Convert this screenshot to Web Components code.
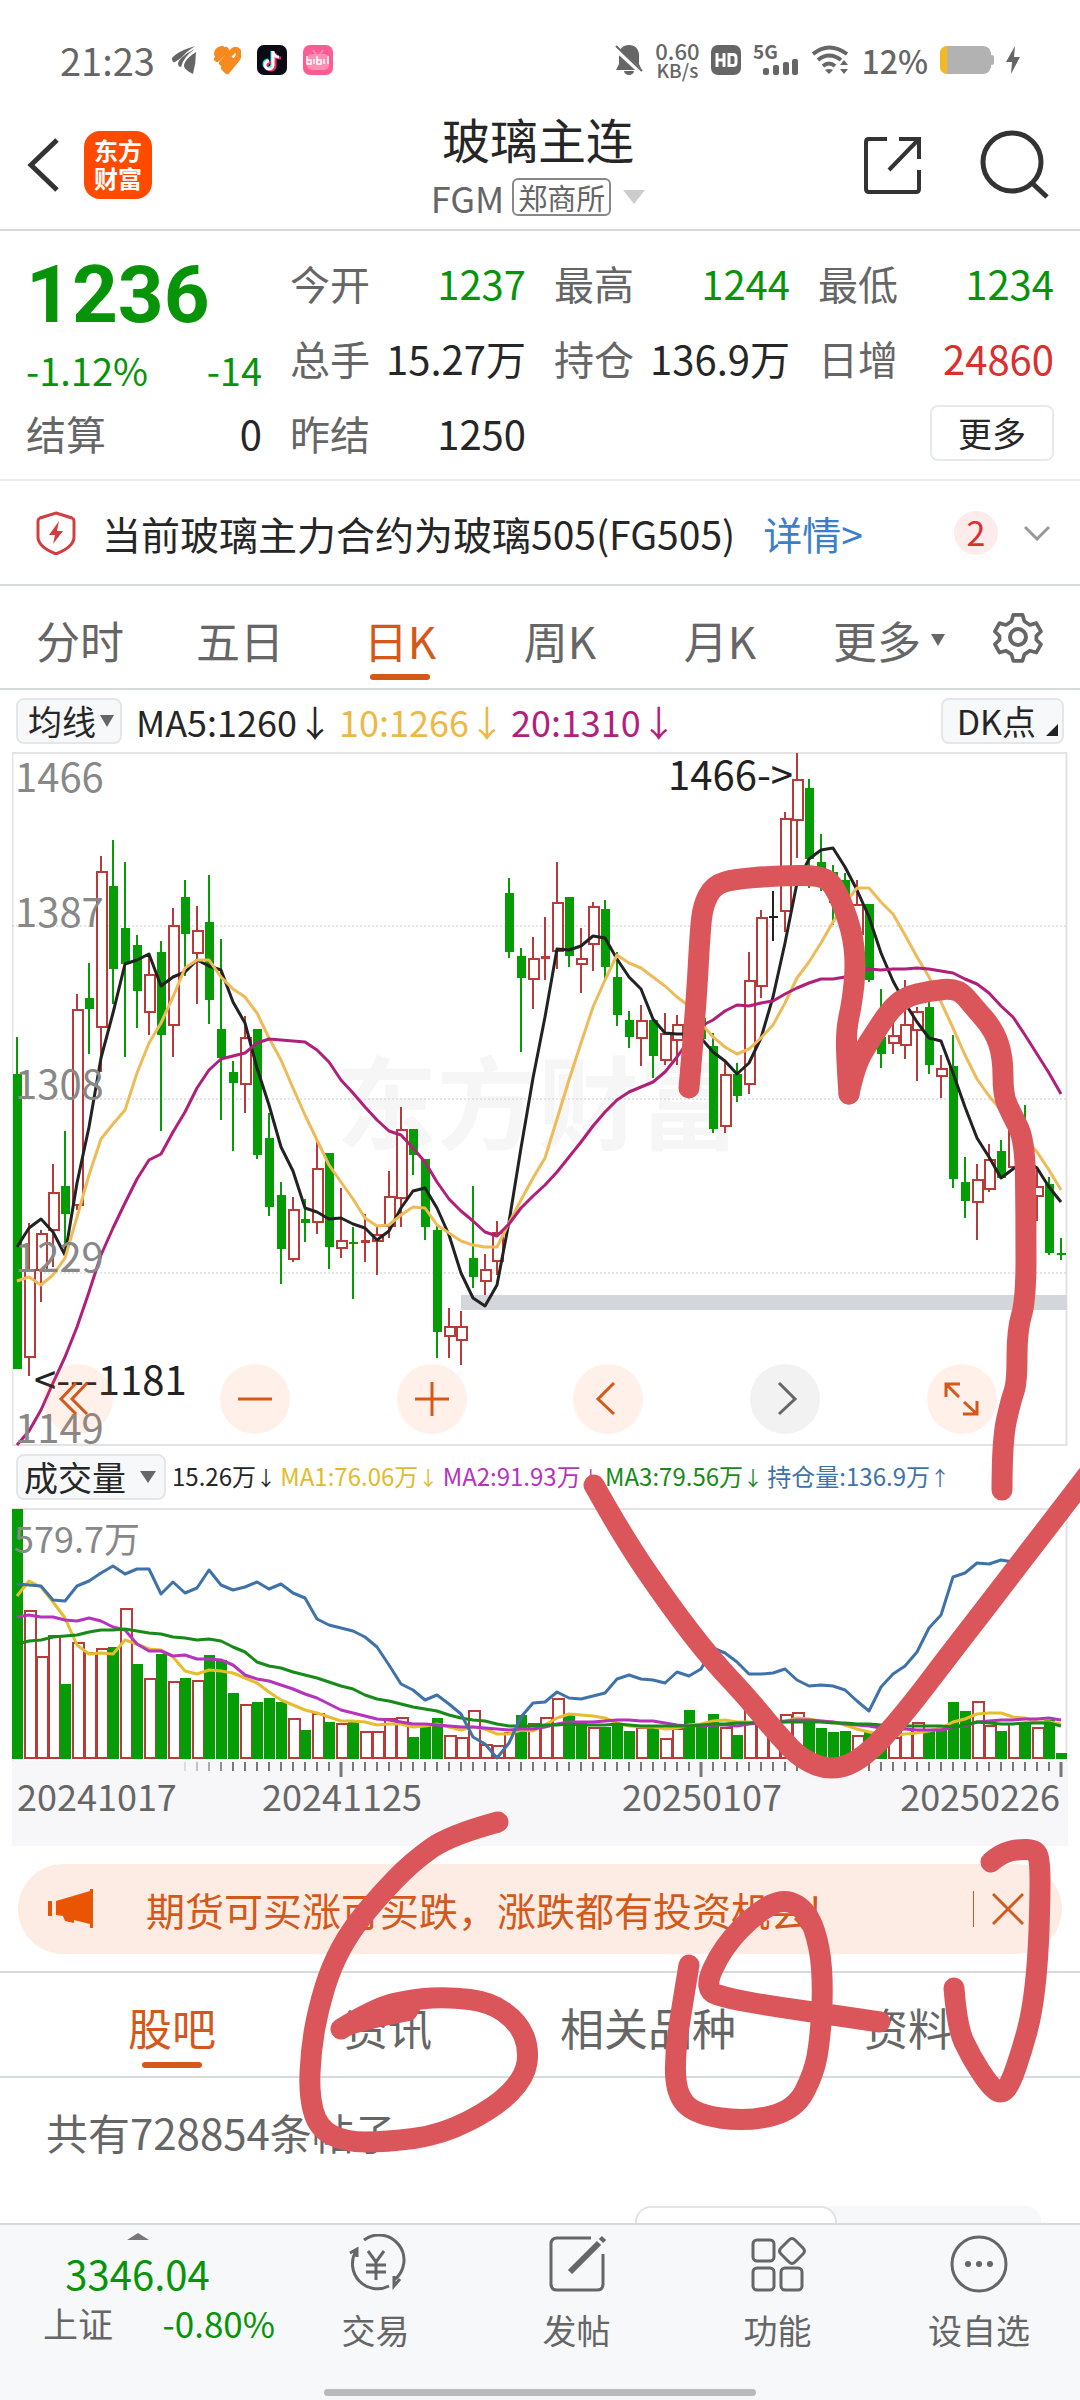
<!DOCTYPE html>
<html lang="zh-CN">
<head>
<meta charset="utf-8">
<meta name="viewport" content="width=device-width, initial-scale=1">
<title>玻璃主连 FGM</title>
<style>
  :root {
    --text: #262626;
    --sub: #666;
    --down: #089408;
    --up: #d93030;
    --accent: #d4581a;
    --line: #d5dada;
    --panel: #f7f8fa;
  }
  body {
    margin: 0;
    background: #fff;
    color: var(--text);
    font-family: "Noto Sans CJK SC", "Noto Sans", sans-serif;
  }
</style>
</head>
<body>
<futures-app>
  <status-bar></status-bar>
  <quote-header name="玻璃主连" code="FGM" exchange="郑商所"></quote-header>
  <quote-summary price="1236" percent="-1.12%" change="-14">
    <quote-cell slot="settle" label="结算" value="0"></quote-cell>
    <quote-cell label="今开" value="1237" tone="down"></quote-cell>
    <quote-cell label="最高" value="1244" tone="down"></quote-cell>
    <quote-cell label="最低" value="1234" tone="down"></quote-cell>
    <quote-cell label="总手" value="15.27万"></quote-cell>
    <quote-cell label="持仓" value="136.9万"></quote-cell>
    <quote-cell label="日增" value="24860" tone="up"></quote-cell>
    <quote-cell label="昨结" value="1250"></quote-cell>
  </quote-summary>
  <notice-bar count="2">当前玻璃主力合约为玻璃505(FG505)</notice-bar>
  <period-tabs></period-tabs>
  <k-chart></k-chart>
  <volume-chart></volume-chart>
  <promo-banner>期货可买涨可买跌，涨跌都有投资机会!</promo-banner>
  <page-tabs></page-tabs>
  <post-list total="728854"></post-list>
  <nav-bar slot="nav"></nav-bar>
  <pen-marks slot="overlay"></pen-marks>
</futures-app>

<script>
const RESET = `
  * { box-sizing: border-box; }
  :host { display: block; box-sizing: border-box; }
  button { margin: 0; padding: 0; border: 0; background: none; font: inherit; color: inherit; }
  a { color: inherit; text-decoration: none; }
  svg { display: block; flex: none; }
`;

class BaseElement extends HTMLElement {
  constructor() {
    super();
    this.attachShadow({ mode: 'open' });
  }

  connectedCallback() {
    this.shadowRoot.innerHTML = `<style>${RESET}${this.styles()}</style>${this.render()}`;
  }

  attr(name) {
    return this.getAttribute(name) || '';
  }
}

class FuturesApp extends BaseElement {
  styles() {
    return `
      :host { position: relative; display: flex; flex-direction: column; height: 100vh; overflow: hidden; }
      main { flex: 1; min-height: 0; overflow: hidden; display: flex; flex-direction: column; }
    `;
  }
  render() {
    return `<main><slot></slot></main><slot name="nav"></slot><slot name="overlay"></slot>`;
  }
}
customElements.define('futures-app', FuturesApp);

class StatusBar extends BaseElement {
  styles() {
    return `
      :host { display: flex; justify-content: space-between; align-items: center; flex: none;
        height: 84px; padding: 36px 60px 0; color: #666; }
      div { display: flex; align-items: center; }
      .left { gap: 16px; }
      .right { gap: 12px; }
      time { font-size: 38px; line-height: 48px; }
      .speed { flex-direction: column; font-size: 22px; line-height: 20px; font-weight: 500; }
      .speed small { font-size: 19px; line-height: 20px; }
      .battery { font-size: 32px; line-height: 48px; font-weight: 500; }
    `;
  }
  render() {
    return `
      <div class="left">
        <time>21:23</time>
        <svg width="26" height="30" viewBox="0 0 26 30" fill="#666"><path d="M24 1C14 4 5 8 1 13q0 5 3 4 3-2 6-4Q16 6 24 1zM24 4C16 8 10 12 7 18q0 4 3 4Q13 11 24 4zM25 7c-6 4-11 8-12 13q-1 4 9 9 3-11 3-22z"/></svg>
        <svg width="28" height="30" viewBox="0 0 28 30" fill="none" stroke="#f68a1f" stroke-width="6" stroke-linecap="round" stroke-linejoin="round"><path d="M4 9q0-4 5-5M4 14 13 5M9 18l9-10q4-5 7-2 2 4-1 8L14 26l-3-3 7-8"/></svg>
        <svg width="30" height="30" viewBox="0 0 30 30"><rect width="30" height="30" rx="7" fill="#0a0b14"/><g fill="none" stroke-width="3"><path stroke="#25e3e0" d="M15 6v13a4 4 0 1 1-4-4M15 7c1 4 3 5 6 5"/><path stroke="#f3305c" d="M18 8v13a4 4 0 1 1-4-4M18 9c1 3 3 4 6 4"/><path stroke="#fff" d="M16 6v14a4 4 0 1 1-4-4M16 7c1 4 3 5 6 5"/></g></svg>
        <svg width="30" height="30" viewBox="0 0 30 30"><rect width="30" height="30" rx="7" fill="#fb5d92"/><rect x="4" y="9" width="22" height="16" rx="5" fill="#fc8fb4"/><path d="M10 5l3 4M20 5l-3 4" stroke="#fc8fb4" stroke-width="2"/><path d="M4 11v8h4v-4H4M11 14v5M14 11v8h4v-4h-4M21 14v5M25 11v8" fill="none" stroke="#fff" stroke-width="1.500"/></svg>
      </div>
      <div class="right">
        <svg width="28" height="32" viewBox="0 0 28 32"><path d="M14 1c6 0 10 4 10 10v9l3 6H1l3-6v-9C4 5 8 1 14 1zM9 27h10a5 4 0 0 1-10 0z" fill="#666"/><path d="M0 4l27 25" stroke="#fff" stroke-width="5"/><path d="M1 2l26 25" stroke="#666" stroke-width="2"/></svg>
        <div class="speed"><span>0.60</span><small>KB/s</small></div>
        <svg width="30" height="30" viewBox="0 0 30 30"><rect width="30" height="30" rx="7" fill="#666"/><path d="M6 8v14M6 15h7M13 8v14M18 9.500h4q3 0 3 3v5q0 3-3 3h-4z" fill="none" stroke="#fff" stroke-width="3"/></svg>
        <svg width="46" height="32" viewBox="0 0 46 32" fill="#666"><text x="0" y="15" font-size="19" font-weight="700">5G</text><rect x="10" y="24" width="6" height="7" rx="2"/><rect x="20" y="21" width="6" height="10" rx="2"/><rect x="30" y="18" width="6" height="13" rx="2"/><rect x="39" y="15" width="6" height="16" rx="2"/></svg>
        <svg width="38" height="30" viewBox="0 0 38 30" fill="none" stroke="#666" stroke-width="4"><path d="M2 9q16-13 34 0M7 15q11-9 23 0M12 21q6-5 12 0"/><path d="M14 25q4-2 8 0l-4 4z" fill="#666" stroke="none"/><path d="M33 15l4 5h-8zM33 29l4-5h-8z" fill="#666" stroke="none"/></svg>
        <span class="battery">12%</span>
        <svg width="54" height="28" viewBox="0 0 54 28"><rect width="51" height="28" rx="8" fill="#b2b2b2"/><rect x="50" y="9" width="4" height="10" rx="2" fill="#b2b2b2"/><path d="M7 0v28A7 7 0 0 1 0 20V8A7 7 0 0 1 7 0z" fill="#f6b820"/></svg>
        <svg width="14" height="28" viewBox="0 0 14 28" fill="#666"><path d="M9 0 0 16h6l-1 12 9-17H8z"/></svg>
      </div>
    `;
  }
}
customElements.define('status-bar', StatusBar);

class QuoteHeader extends BaseElement {
  styles() {
    return `
      :host { display: grid; grid-template-columns: 1fr auto 1fr; align-items: center; flex: none;
        height: 147px; padding: 18px 30px 2px 26px; border-bottom: 2px solid var(--line); }
      .left { display: flex; align-items: center; gap: 24px; }
      .logo { width: 68px; height: 68px; border-radius: 16px; background: #ff4a00; color: #fff;
        font-size: 24px; line-height: 28px; font-weight: 700; padding: 5px 10px; white-space: nowrap; }
      .right { display: flex; align-items: center; justify-content: flex-end; gap: 58px; }
      .mid { display: flex; flex-direction: column; align-items: center; }
      h1 { margin: 0; font-size: 48px; line-height: 64px; font-weight: 400; }
      .code { display: flex; align-items: center; gap: 8px; font-size: 36px; line-height: 54px; color: var(--sub); }
      .tag { border: 2px solid #888; border-radius: 6px; padding: 0 4px; font-size: 29px; line-height: 34px; }
      .code svg { margin-left: 4px; }
    `;
  }
  render() {
    return `
      <div class="left">
        <button aria-label="返回"><svg width="34" height="54" viewBox="0 0 34 54" fill="none" stroke="#333" stroke-width="5"><path d="M31 2 5 27l26 25"/></svg></button>
        <div class="logo">东方<br>财富</div>
      </div>
      <div class="mid">
        <h1>${this.attr('name')}</h1>
        <div class="code">${this.attr('code')}<span class="tag">${this.attr('exchange')}</span>
          <svg width="22" height="14" viewBox="0 0 22 14" fill="#ccc"><path d="M0 0h22L11 14z"/></svg>
        </div>
      </div>
      <div class="right">
        <button aria-label="分享"><svg width="60" height="60" viewBox="0 0 60 60" fill="none" stroke="#333" stroke-width="4"><path d="M25 4H7q-3 0-3 3v47q0 3 3 3h47q3 0 3-3V35M37 4h20v20M57 4 27 35"/></svg></button>
        <button aria-label="搜索"><svg width="70" height="70" viewBox="0 0 70 70" fill="none" stroke="#333" stroke-width="5"><circle cx="32" cy="32" r="29"/><path d="M52 53l15 14"/></svg></button>
      </div>
    `;
  }
}
customElements.define('quote-header', QuoteHeader);

class QuoteCell extends BaseElement {
  styles() {
    return `
      :host { display: flex; justify-content: space-between; align-items: center; height: 75px;
        font-size: 40px; line-height: 48px; white-space: nowrap; }
      .label { color: var(--sub); }
      :host([tone="down"]) .value { color: var(--down); }
      :host([tone="up"]) .value { color: var(--up); }
    `;
  }
  render() {
    return `<span class="label">${this.attr('label')}</span><span class="value">${this.attr('value')}</span>`;
  }
}
customElements.define('quote-cell', QuoteCell);

class QuoteSummary extends BaseElement {
  styles() {
    return `
      :host { display: grid; grid-template-columns: 236fr 764fr; column-gap: 28px; flex: none;
        padding: 14px 26px 9px; border-bottom: 2px solid #eceeee; }
      .price { font-family: Roboto, sans-serif; font-size: 80px; line-height: 100px; font-weight: 700; color: var(--down); }
      .change { display: flex; justify-content: space-between; color: var(--down);
        font-size: 38px; line-height: 50px; }
      .cells { display: grid; grid-template-columns: repeat(3, 1fr); column-gap: 28px; }
      .more { grid-column: 3; grid-row: 3; justify-self: end; align-self: center; width: 124px; height: 56px;
        border: 2px solid #e6eaea; border-radius: 8px; font-size: 34px; line-height: 48px; }
    `;
  }
  render() {
    return `
      <div>
        <div class="price">${this.attr('price')}</div>
        <div class="change"><span>${this.attr('percent')}</span><span>${this.attr('change')}</span></div>
        <slot name="settle"></slot>
      </div>
      <div class="cells"><slot></slot><button class="more">更多</button></div>
    `;
  }
}
customElements.define('quote-summary', QuoteSummary);

class NoticeBar extends BaseElement {
  styles() {
    return `
      :host { display: flex; align-items: center; flex: none; height: 105px; padding: 0 30px 0 36px;
        border-bottom: 2px solid var(--line); font-size: 39px; line-height: 48px; white-space: nowrap; }
      .text { margin: 0 28px 0 26px; }
      a { color: #3b7fc9; }
      .count { margin-left: auto; width: 44px; height: 44px; border-radius: 50%; background: #fdeceb;
        color: var(--up); font-size: 34px; line-height: 42px; text-align: center; }
      button { margin-left: 26px; }
    `;
  }
  render() {
    return `
      <svg width="40" height="44" viewBox="0 0 40 44" fill="none" stroke="#d04040" stroke-width="3"><path d="M20 2l16 5q2 1 2 3v16c0 8-8 13-18 17C10 39 2 34 2 26V10q0-2 2-3z"/><path d="M23 10 13 24h6l-2 9 10-13h-6z" fill="#d04040" stroke="none"/></svg>
      <span class="text"><slot></slot></span>
      <a href="#detail">详情&gt;</a>
      <span class="count">${this.attr('count')}</span>
      <button aria-label="展开"><svg width="26" height="16" viewBox="0 0 26 16" fill="none" stroke="#999" stroke-width="3"><path d="M1 2l12 12L25 2"/></svg></button>
    `;
  }
}
customElements.define('notice-bar', NoticeBar);

class PeriodTabs extends BaseElement {
  styles() {
    return `
      :host { display: flex; align-items: center; flex: none; height: 104px;
        border-bottom: 2px solid var(--line); font-size: 44px; line-height: 56px; color: var(--sub); }
      .tab { flex: 160; height: 100%; display: flex; flex-direction: column; align-items: center;
        justify-content: flex-end; gap: 6px; padding-bottom: 8px; }
      .tab::after { content: ""; width: 60px; height: 6px; border-radius: 3px; }
      .tab.on { color: var(--accent); }
      .tab.on::after { background: var(--accent); }
      .more { flex: 178; display: flex; align-items: center; justify-content: center; gap: 10px; padding-top: 6px; }
      .gear { flex: 88; display: flex; padding-left: 14px; }
    `;
  }
  render() {
    const tabs = ['分时', '五日', '日K', '周K', '月K']
      .map(t => `<button class="tab${t === '日K' ? ' on' : ''}">${t}</button>`).join('');
    return `
      ${tabs}
      <button class="more">更多<svg width="14" height="12" viewBox="0 0 14 12" fill="#666"><path d="M0 0h14L7 12z"/></svg></button>
      <button class="gear" aria-label="设置"><svg width="52" height="52" viewBox="0 0 52 52" fill="none" stroke="#666" stroke-width="4" stroke-linejoin="round"><path d="M21 2h10l2 7 6 4 7-2 5 9-5 5v4l5 5-5 9-7-2-6 4-2 7H21l-2-7-6-4-7 2-5-9 5-5v-4l-5-5 5-9 7 2 6-4z" transform="translate(2 2) scale(.92)"/><circle cx="26" cy="26" r="8"/></svg></button>
    `;
  }
}
customElements.define('period-tabs', PeriodTabs);

// Both charts share one x scale: 88 bars, 12 units apart.
const STEP = 12;
const FIRST_X = 17;
const px = i => FIRST_X + i * STEP;

const line = (points, color, width = 3) =>
  `<polyline fill="none" stroke="${color}" stroke-width="${width}" stroke-linejoin="round" points="${points.map((y, i) => `${px(i)},${y}`).join(' ')}"/>`;

const GREEN = '#069c06';
const RED = '#b93a38';

// kind, high, body top, body bottom, low
const CANDLES = [
  'g 1037 1074 1369 1369', 'r 1223 1269 1356 1376', 'r 1230 1233 1269 1302', 'r 1164 1192 1229 1267',
  'g 1131 1186 1214 1255', 'r 994 1009 1204 1210', 'g 963 998 1009 1054', 'r 856 871 1026 1072',
  'g 840 886 969 1004', 'g 862 928 964 1057', 'g 935 945 991 1028', 'r 955 974 1011 1035',
  'g 941 952 1035 1131', 'r 908 925 1024 1057', 'g 880 897 934 976', 'r 906 930 952 1004',
  'g 875 922 1000 1024', 'g 939 1029 1058 1120', 'g 1061 1072 1083 1151', 'r 1016 1037 1083 1113',
  'g 1029 1029 1155 1159', 'g 1113 1138 1207 1216', 'g 1182 1195 1249 1284', 'r 1197 1209 1258 1262',
  'g 1199 1219 1223 1242', 'r 1142 1168 1221 1234', 'g 1153 1153 1247 1269', 'r 1188 1240 1247 1258',
  'g 1227 1242 1244 1299', 'f 1214 1240 1243 1262', 'r 1225 1234 1240 1275', 'r 1171 1196 1225 1238',
  'r 1107 1129 1197 1227', 'g 1129 1129 1155 1175', 'g 1159 1159 1227 1240', 'g 1225 1230 1332 1358',
  'r 1308 1326 1335 1358', 'r 1311 1326 1339 1365', 'g 1186 1258 1277 1288', 'r 1254 1269 1280 1295',
  'r 1221 1232 1260 1275', 'g 878 893 952 958', 'g 948 956 978 1052', 'r 937 958 978 1009',
  'f 917 956 959 980', 'r 862 902 950 969', 'g 897 897 956 967', 'r 928 958 963 993',
  'r 902 906 943 971', 'g 900 909 967 980', 'g 952 977 1015 1026', 'g 1011 1020 1037 1048',
  'r 1005 1020 1037 1066', 'g 1020 1020 1056 1078', 'r 1013 1033 1059 1065', 'r 1015 1024 1039 1065',
  'r 1000 1020 1040 1060', 'g 1010 1018 1039 1045', 'g 1033 1046 1129 1133', 'r 1062 1074 1125 1133',
  'g 1063 1074 1096 1102', 'r 952 980 1083 1094', 'r 910 917 985 998', 'k 891 916 918 941',
  'r 812 818 910 932', 'r 753 779 819 858', 'g 779 788 859 888', 'g 834 862 873 891',
  'g 865 872 903 925', 'g 873 880 905 910', 'r 880 904 933 933', 'g 904 904 980 982',
  'g 989 1037 1054 1068', 'r 1020 1035 1042 1054', 'r 980 1024 1044 1059', 'r 1007 1011 1029 1081',
  'g 1002 1007 1065 1074', 'r 1055 1068 1075 1098', 'g 1035 1066 1179 1188', 'g 1157 1182 1201 1218',
  'r 1164 1179 1201 1240', 'r 1144 1159 1188 1192', 'g 1140 1151 1178 1178', 'r 1110 1130 1166 1170',
  'g 1105 1130 1160 1170', 'r 1170 1186 1195 1221', 'g 1177 1184 1253 1255', 'g 1238 1253 1255 1260',
].map(row => row.split(' '));

const MA5 = [1247, 1228, 1219, 1232, 1255, 1183, 1127, 1058, 1013, 964, 960, 954, 986, 977, 972, 960, 966, 970, 1002, 1023, 1068, 1105, 1147, 1171, 1208, 1212, 1219, 1218, 1224, 1228, 1240, 1231, 1208, 1191, 1188, 1208, 1235, 1273, 1298, 1306, 1285, 1222, 1148, 1078, 1017, 949, 950, 946, 936, 938, 959, 977, 989, 1019, 1033, 1034, 1034, 1038, 1052, 1061, 1074, 1063, 1038, 997, 943, 883, 859, 850, 848, 867, 890, 917, 953, 981, 1003, 1022, 1038, 1041, 1073, 1107, 1138, 1157, 1178, 1169, 1160, 1168, 1187, 1202];
const MA10 = [1281, 1277, 1285, 1275, 1258, 1217, 1175, 1139, 1124, 1110, 1073, 1043, 1023, 997, 968, 960, 960, 977, 989, 997, 1013, 1038, 1060, 1088, 1115, 1140, 1165, 1182, 1199, 1218, 1226, 1225, 1215, 1207, 1208, 1225, 1233, 1241, 1245, 1247, 1247, 1223, 1200, 1178, 1158, 1119, 1080, 1043, 1007, 980, 955, 963, 968, 977, 986, 997, 1006, 1023, 1037, 1047, 1054, 1049, 1038, 1025, 1003, 978, 962, 943, 922, 903, 888, 888, 902, 914, 935, 957, 977, 1002, 1028, 1055, 1079, 1096, 1110, 1125, 1138, 1152, 1170, 1190];
const MA20 = [1445, 1431, 1410, 1383, 1357, 1327, 1292, 1255, 1228, 1203, 1179, 1160, 1154, 1132, 1112, 1088, 1070, 1059, 1056, 1053, 1043, 1039, 1040, 1041, 1042, 1050, 1062, 1080, 1093, 1107, 1120, 1131, 1135, 1148, 1162, 1182, 1199, 1211, 1221, 1232, 1236, 1224, 1208, 1196, 1185, 1172, 1157, 1142, 1126, 1112, 1100, 1092, 1087, 1082, 1072, 1057, 1040, 1026, 1020, 1011, 1005, 1006, 1003, 1001, 994, 988, 983, 979, 979, 977, 971, 969, 970, 969, 969, 968, 969, 971, 973, 979, 984, 993, 1006, 1017, 1035, 1054, 1073, 1094];

const INDICATOR_ROW = `
  .bar { display: flex; align-items: center; height: 62px; padding: 0 16px; white-space: nowrap; }
  .pick { height: 46px; border: 2px solid #e3e7ea; border-radius: 8px; background: var(--panel);
    display: flex; align-items: center; font-size: 34px; line-height: 40px; }
  .chart { position: relative; margin: 0 12px; }
  .chart > svg { width: 100%; height: auto; }
`;

class KChart extends BaseElement {
  styles() {
    return `${INDICATOR_ROW}
      .pick { gap: 4px; padding: 0 6px 0 10px; }
      .values { display: flex; gap: 6px; margin: 0 auto 0 14px; font-size: 36px; line-height: 48px; }
      .dk { align-items: center; padding: 0 4px 0 14px; gap: 10px; }
      .dk svg { align-self: flex-end; margin-bottom: 6px; }
      .tools { position: absolute; left: 31px; right: 71px; bottom: 12px; display: flex; justify-content: space-between; }
      .tools button { width: 70px; height: 70px; border-radius: 50%; background: rgba(255, 105, 40, .1); }
      .tools button.idle { background: #f2f2f2; }
      .tools svg { fill: none; stroke: var(--accent); stroke-width: 3; }
      .tools .idle svg { stroke: #666; }
    `;
  }

  candle([kind, high, top, bottom, low], i) {
    const x = px(i);
    const color = { g: GREEN, r: RED, f: RED, k: '#222' }[kind];
    const h = Math.max(bottom - top, 2);
    const body = kind === 'r'
      ? `<rect x="${x - 4}" y="${+top + 1}" width="10" height="${h}" fill="#fff" stroke="${RED}" stroke-width="2"/>`
      : `<rect x="${x - 4}" y="${top}" width="9" height="${h}" fill="${color}"/>`;
    return `<path d="M${x} ${high}V${low}" stroke="${color}" stroke-width="2"/>${body}`;
  }

  render() {
    const grid = [926, 1099, 1273].map(y => `<path d="M12 ${y}H1067" stroke="#ccc" stroke-dasharray="2 2"/>`).join('');
    const labels = [[792, 1466], [927, 1387], [1099, 1308], [1272, 1229], [1443, 1149]]
      .map(([y, v]) => `<text x="15" y="${y}">${v}</text>`).join('');
    const icons = [
      ['后退', 'M33 19 18 35l15 15M44 19 29 35l15 15'],
      ['缩小', 'M18 35h34'],
      ['放大', 'M18 35h34M35 18v34'],
      ['左移', 'M41 19 25 35l16 15'],
      ['右移', 'M29 19l16 16-16 15'],
      ['全屏', 'M19 33V20h14M19 20l13 13M50 37v13H36M50 50 37 38'],
    ];
    const tools = icons.map(([name, d]) =>
      `<button aria-label="${name}"${name === '右移' ? ' class="idle"' : ''}><svg width="70" height="70" viewBox="0 0 70 70"><path d="${d}"/></svg></button>`).join('');
    return `
      <div class="bar">
        <button class="pick">均线<svg width="14" height="12" viewBox="0 0 14 12" fill="#666"><path d="M0 0h14L7 12z"/></svg></button>
        <div class="values"><span>MA5:1260↓</span><span style="color:#edb845">10:1266↓</span><span style="color:#b41f7d">20:1310↓</span></div>
        <button class="pick dk">DK点<svg width="12" height="12" viewBox="0 0 12 12"><path d="M12 0v12H0z" fill="#222"/></svg></button>
      </div>
      <div class="chart">
        <svg viewBox="12 752 1056 694" font-size="40">
          <rect x="12.500" y="753" width="1054" height="692" fill="#fff" stroke="#e3e3e3" stroke-width="2"/>
          <text x="336" y="1142" font-size="101" font-weight="700" fill="#f6f6f6">东方财富</text>
          ${grid}
          <rect x="461" y="1295" width="606" height="15" fill="#d3d7dc"/>
          ${CANDLES.map((c, i) => this.candle(c, i)).join('')}
          ${line(MA5, '#222')}${line(MA10, '#edbb58')}${line(MA20, '#b01f7a')}
          <g fill="#888">${labels}</g>
          <g fill="#222"><text x="793" y="790" text-anchor="end">1466-&gt;</text><text x="34" y="1395">&lt;---1181</text></g>
        </svg>
        <div class="tools">${tools}</div>
      </div>
    `;
  }
}
customElements.define('k-chart', KChart);

const VOLUMES = 'g1509 r1610 r1656 r1635 g1684 r1642 r1652 r1648 g1647 r1608 g1664 r1678 g1654 r1681 g1678 r1680 g1655 g1660 g1693 r1704 g1702 g1698 g1702 r1718 g1730 r1713 g1722 r1723 g1720 r1731 r1731 r1718 r1717 g1737 g1726 g1718 r1735 r1737 r1710 r1744 r1745 r1732 g1715 r1723 r1717 r1698 g1715 g1723 r1727 g1727 g1724 g1731 r1727 g1727 r1738 r1728 g1710 g1723 g1714 r1727 g1735 r1708 r1724 r1722 r1714 r1712 g1722 g1728 g1732 g1731 r1735 g1732 g1730 r1737 r1728 r1722 g1730 g1730 g1702 g1711 r1701 r1725 g1731 r1723 g1722 r1727 g1720 g1753'.split(' ');
const VOL_MA1 = [1596, 1581, 1587, 1602, 1618, 1645, 1654, 1653, 1654, 1640, 1644, 1649, 1650, 1657, 1671, 1674, 1670, 1671, 1673, 1678, 1683, 1692, 1700, 1705, 1710, 1713, 1717, 1721, 1721, 1722, 1725, 1724, 1724, 1727, 1726, 1724, 1727, 1730, 1727, 1729, 1734, 1734, 1730, 1731, 1725, 1718, 1714, 1715, 1716, 1718, 1723, 1726, 1727, 1727, 1729, 1728, 1725, 1724, 1721, 1720, 1722, 1722, 1723, 1724, 1722, 1718, 1719, 1721, 1722, 1725, 1729, 1732, 1734, 1736, 1734, 1733, 1731, 1728, 1722, 1719, 1714, 1713, 1713, 1717, 1718, 1722, 1722, 1724];
const VOL_MA2 = [1617, 1615, 1617, 1617, 1620, 1621, 1618, 1621, 1627, 1630, 1644, 1651, 1651, 1656, 1655, 1659, 1659, 1660, 1665, 1675, 1679, 1681, 1685, 1689, 1694, 1698, 1704, 1710, 1713, 1716, 1719, 1720, 1722, 1724, 1724, 1725, 1726, 1727, 1727, 1728, 1729, 1730, 1729, 1729, 1727, 1724, 1722, 1722, 1722, 1721, 1720, 1720, 1721, 1721, 1723, 1725, 1726, 1726, 1725, 1725, 1726, 1724, 1723, 1722, 1721, 1720, 1720, 1721, 1722, 1724, 1725, 1726, 1728, 1729, 1729, 1730, 1730, 1730, 1727, 1726, 1722, 1721, 1720, 1720, 1719, 1719, 1718, 1720];
const VOL_MA3 = [1644, 1641, 1640, 1637, 1636, 1635, 1632, 1630, 1630, 1629, 1631, 1633, 1634, 1637, 1638, 1640, 1639, 1641, 1647, 1652, 1662, 1666, 1668, 1672, 1675, 1678, 1682, 1686, 1689, 1695, 1699, 1701, 1704, 1707, 1709, 1711, 1715, 1718, 1720, 1721, 1724, 1726, 1726, 1726, 1725, 1725, 1724, 1725, 1725, 1725, 1724, 1725, 1726, 1726, 1726, 1726, 1726, 1725, 1724, 1724, 1723, 1723, 1722, 1722, 1722, 1722, 1722, 1722, 1723, 1723, 1724, 1724, 1725, 1725, 1726, 1726, 1726, 1726, 1727, 1725, 1722, 1723, 1724, 1724, 1723, 1723, 1723, 1726];
const POSITION = [1584, 1585, 1586, 1600, 1601, 1586, 1581, 1573, 1566, 1574, 1569, 1569, 1594, 1582, 1593, 1588, 1570, 1585, 1590, 1587, 1582, 1589, 1584, 1593, 1598, 1619, 1625, 1628, 1631, 1637, 1647, 1665, 1684, 1690, 1700, 1695, 1704, 1714, 1737, 1744, 1758, 1743, 1717, 1703, 1702, 1692, 1698, 1699, 1696, 1693, 1679, 1675, 1679, 1680, 1683, 1672, 1676, 1669, 1648, 1653, 1662, 1674, 1674, 1673, 1669, 1680, 1686, 1685, 1686, 1690, 1701, 1711, 1687, 1674, 1666, 1652, 1628, 1615, 1577, 1573, 1563, 1564, 1560, 1562];

class VolumeChart extends BaseElement {
  styles() {
    return `${INDICATOR_ROW}
      .pick { gap: 14px; padding: 0 8px 0 6px; }
      .values { flex: 1; display: flex; justify-content: space-between; margin: 0 114px 0 6px; font-size: 24px; line-height: 40px; }
      .values i { font-style: normal; font-size: 20px; }
    `;
  }

  bar(item, i) {
    const y = +item.slice(1);
    const x = px(i);
    return item[0] === 'g'
      ? `<rect x="${x - 5}" y="${y}" width="11" height="${1759 - y}" fill="${GREEN}"/>`
      : `<rect x="${x - 4}" y="${y + 1}" width="11" height="${1757 - y}" fill="#fff" stroke="${RED}" stroke-width="2"/>`;
  }

  render() {
    const ticks = VOLUMES.map((_, i) => {
      if (i < 14) return '';
      const major = [27, 57, 87].includes(i);
      const opacity = Math.min(1, (i - 13) / 5);
      return `<path d="M${px(i)} 1762V${major ? 1777 : 1771}" stroke="#777" stroke-width="${major ? 3 : 2}" opacity="${opacity}"/>`;
    }).join('');
    return `
      <div class="bar">
        <button class="pick">成交量<svg width="16" height="12" viewBox="0 0 16 12" fill="#666"><path d="M0 0h16L8 12z"/></svg></button>
        <div class="values">
          <span>15.26万<i>↓</i></span>
          <span style="color:#e2bb2c">MA1:76.06万<i>↓</i></span>
          <span style="color:#b633bd">MA2:91.93万<i>↓</i></span>
          <span style="color:#178a17">MA3:79.56万<i>↓</i></span>
          <span style="color:#3f72a8">持仓量:136.9万<i>↑</i></span>
        </div>
      </div>
      <div class="chart">
        <svg viewBox="12 1508 1056 338" font-size="36">
          <rect x="12" y="1761" width="1056" height="85" fill="#f7f7fa"/>
          <path d="M12.500 1761V1509H1066.500V1761" fill="none" stroke="#e3e3e3" stroke-width="2"/>
          ${VOLUMES.map((v, i) => this.bar(v, i)).join('')}
          ${line(VOL_MA1, '#e6bd2e')}${line(VOL_MA2, '#b633bd')}${line(VOL_MA3, '#178a17')}${line(POSITION, '#3f72a8')}
          ${ticks}
          <text x="14" y="1553" fill="#888">579.7万</text>
          <g fill="#666">
            <text x="17" y="1811">20241017</text>
            <text x="342" y="1811" text-anchor="middle">20241125</text>
            <text x="702" y="1811" text-anchor="middle">20250107</text>
            <text x="1060" y="1811" text-anchor="end">20250226</text>
          </g>
        </svg>
      </div>
    `;
  }
}
customElements.define('volume-chart', VolumeChart);

class PromoBanner extends BaseElement {
  styles() {
    return `
      :host { display: flex; align-items: center; flex: none; height: 90px; margin: 18px 18px 17px;
        padding: 0 38px 0 30px; border-radius: 45px; background: #fcece3; color: var(--accent);
        font-size: 39px; line-height: 56px; white-space: nowrap; }
      .text { margin-left: 52px; }
      button { margin-left: auto; padding-left: 18px; border-left: 1px solid var(--accent); }
    `;
  }
  render() {
    return `
      <svg width="46" height="40" viewBox="0 0 46 40" fill="#ea5504"><path d="M0 12h4v15H0zM8 12 42 2V0h3v39h-3v-4l-16-4v3l-9-2-2-5-7-1z"/></svg>
      <span class="text"><slot></slot></span>
      <button aria-label="关闭"><svg width="32" height="36" viewBox="0 0 32 36" fill="none" stroke="#d4581a" stroke-width="3"><path d="M1 3l30 30M31 3 1 33"/></svg></button>
    `;
  }
}
customElements.define('promo-banner', PromoBanner);

class PageTabs extends BaseElement {
  styles() {
    return `
      :host { display: flex; justify-content: space-between; flex: none; height: 107px; padding: 0 128px;
        border-top: 2px solid var(--line); border-bottom: 2px solid var(--line);
        font-size: 44px; line-height: 58px; color: var(--sub); }
      button { display: flex; flex-direction: column; align-items: center; justify-content: flex-end; gap: 6px; padding-bottom: 8px; }
      button::after { content: ""; width: 60px; height: 6px; border-radius: 3px; }
      .on { color: var(--accent); }
      .on::after { background: var(--accent); }
    `;
  }
  render() {
    return ['股吧', '资讯', '相关品种', '资料']
      .map((t, i) => `<button${i ? '' : ' class="on"'}>${t}</button>`).join('');
  }
}
customElements.define('page-tabs', PageTabs);

class PostList extends BaseElement {
  styles() {
    return `
      :host { display: flex; flex-direction: column; flex: 1; min-height: 0; overflow: hidden; padding: 22px 39px 0 46px; }
      p { margin: 0; font-size: 42px; line-height: 64px; color: var(--sub); }
      .sort { display: flex; flex: none; align-self: flex-end; width: 406px; height: 70px; margin-top: 42px;
        border-radius: 16px; background: var(--panel); }
      .sort button { width: 202px; border: 2px solid #e3e3e3; border-radius: 16px; background: #fff; }
    `;
  }
  render() {
    return `<p>共有${this.attr('total')}条帖子</p><div class="sort"><button aria-label="排序"></button></div>`;
  }
}
customElements.define('post-list', PostList);

class NavBar extends BaseElement {
  styles() {
    return `
      :host { flex: none; height: 177px; background: var(--panel); border-top: 2px solid var(--line); color: var(--sub); }
      nav { display: grid; grid-template-columns: 275fr 201fr 201fr 201fr 202fr; height: 162px; }
      a { display: flex; flex-direction: column; align-items: center; font-size: 34px; line-height: 48px; padding-top: 9px; }
      a svg { margin-bottom: 12px; }
      .index { padding-top: 8px; }
      .index svg { margin: 0; }
      .index b { font-weight: 400; font-size: 40px; line-height: 50px; margin-top: 8px; color: var(--down); }
      .index span { display: flex; justify-content: space-between; align-self: flex-end; width: 232px; font-size: 35px; line-height: 50px; }
      em { font-style: normal; color: var(--down); }
      .home { width: 40%; height: 7px; margin: 2px auto 0; border-radius: 4px; background: #b9babb; }
    `;
  }
  render() {
    const items = [
      ['交易', '<path d="M19 6a25 25 0 0 1 30 40M44 52A25 25 0 0 1 11 17M5 19l7-4v8M49 42v10l6-7M23 17l8 11 8-11M31 28v18M21 31h20M21 38h20"/>'],
      ['发帖', '<path d="M45 4H11q-6 0-6 6v40q0 6 6 6h40q6 0 6-6V20"/><path d="M24 38 53 9" stroke-width="6"/><path d="M55 7l3-3" stroke-width="6"/>'],
      ['功能', '<rect x="6" y="6" width="21" height="21" rx="4"/><rect x="6" y="34" width="21" height="22" rx="4"/><rect x="34" y="34" width="21" height="22" rx="4"/><path d="M42 6q3-3 6 0l8 8q3 3 0 6l-8 8q-3 3-6 0l-8-8q-3-3 0-6z"/>'],
      ['设自选', '<circle cx="31" cy="30" r="27"/><g fill="#666" stroke="none"><circle cx="20" cy="30" r="3"/><circle cx="31" cy="30" r="3"/><circle cx="42" cy="30" r="3"/></g>'],
    ].map(([name, icon]) =>
      `<a href="#"><svg width="62" height="60" viewBox="0 0 62 60" fill="none" stroke="#666" stroke-width="3">${icon}</svg>${name}</a>`).join('');
    return `
      <nav>
        <a class="index" href="#"><svg width="22" height="7" viewBox="0 0 22 7" fill="#777"><path d="M11 0l11 7H0z"/></svg>
          <b>3346.04</b><span>上证<em>-0.80%</em></span></a>
        ${items}
      </nav>
      <div class="home"></div>
    `;
  }
}
customElements.define('nav-bar', NavBar);

// Freehand marks drawn over the whole screen.
class PenMarks extends BaseElement {
  styles() {
    return `
      :host { position: absolute; left: 0; top: 0; width: 100%; pointer-events: none; }
      svg { width: 100%; height: auto; }
    `;
  }

  // Quadratic curve through the midpoints of the sampled points.
  smooth(text) {
    const p = text.split(' ').map(s => s.split(',').map(Number));
    let d = `M${p[0]}`;
    for (let i = 1; i < p.length - 1; i++) {
      const end = i === p.length - 2 ? p[i + 1] : [(p[i][0] + p[i + 1][0]) / 2, (p[i][1] + p[i + 1][1]) / 2];
      d += `Q${p[i]} ${end}`;
    }
    return `<path d="${d}"/>`;
  }

  render() {
    const strokes = [
      '689,1088 696,1007 700,933 703,905 714,885 735,879 775,876 822,875 836,888 852,930 856,965 852,1003 846,1030 847,1067 849,1094',
      '849,1094 855,1065 872,1037 890,1010 905,997 929,991 958,988 974,1007 994,1030 1003,1057 1003,1095 1011,1113 1025,1140 1026,1217 1026,1300 1017,1330 1017,1383 1011,1400 1002,1440 1002,1490',
      '594,1485 623,1537 671,1607 712,1660 747,1697 778,1735 802,1760 833,1771 864,1758 902,1717 953,1650 1015,1570 1090,1472',
      '498,1822 450,1835 412,1862 380,1895 351,1930 331,1967 318,2010 311,2050 309,2095 318,2128 345,2142 386,2142 441,2135 496,2107 525,2077 529,2048 518,2022 490,2002 450,1997 413,1999 375,2008 341,2029',
      '689,1965 682,2007 675,2053 676,2093 694,2114 747,2122 795,2110 814,2073 820,2040 823,1990 820,1947 808,1912 785,1898 757,1912 723,1947 703,1990 730,1999 778,2007 833,2015 880,2022',
      '991,1862 1000,1854 1018,1849 1036,1850 1040,1862 1040,1900 1038,1960 1032,2013 1022,2050 1010,2085 1001,2094 990,2086 971,2057 957,2027 954,1988',
    ];
    return `
      <svg viewBox="0 0 1080 2400" fill="none" stroke="#da565b" stroke-width="21" stroke-linecap="round" stroke-linejoin="round">
        ${strokes.map(s => this.smooth(s)).join('')}
        <path d="M341 2029l40-18 34-8-6 10-30 6z" fill="#da565b" stroke-width="16"/>
      </svg>
    `;
  }
}
customElements.define('pen-marks', PenMarks);
</script>
</body>
</html>
